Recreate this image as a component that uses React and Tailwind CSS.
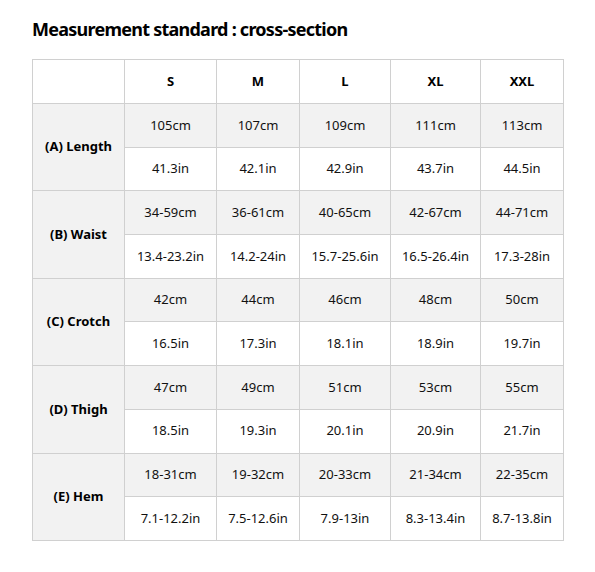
import React from "react";

const sizes = ["S", "M", "L", "XL", "XXL"];
const rows = [
  { label: "(A) Length", cm: ["105cm", "107cm", "109cm", "111cm", "113cm"], inch: ["41.3in", "42.1in", "42.9in", "43.7in", "44.5in"] },
  { label: "(B) Waist", cm: ["34-59cm", "36-61cm", "40-65cm", "42-67cm", "44-71cm"], inch: ["13.4-23.2in", "14.2-24in", "15.7-25.6in", "16.5-26.4in", "17.3-28in"] },
  { label: "(C) Crotch", cm: ["42cm", "44cm", "46cm", "48cm", "50cm"], inch: ["16.5in", "17.3in", "18.1in", "18.9in", "19.7in"] },
  { label: "(D) Thigh", cm: ["47cm", "49cm", "51cm", "53cm", "55cm"], inch: ["18.5in", "19.3in", "20.1in", "20.9in", "21.7in"] },
  { label: "(E) Hem", cm: ["18-31cm", "19-32cm", "20-33cm", "21-34cm", "22-35cm"], inch: ["7.1-12.2in", "7.5-12.6in", "7.9-13in", "8.3-13.4in", "8.7-13.8in"] },
];

const cell = "border border-[#d0d0d0] text-center align-middle p-0 h-[43.7px]";

export default function App() {
  return (
    <div className="bg-white w-[595px] h-[572px] pl-[32px] pt-[17px] text-[#111]" style={{ fontFamily: '"Noto Sans", "Open Sans", sans-serif' }}>
      <h1 className="text-[18px] font-bold leading-[24px] tracking-[-0.75px] text-black">Measurement standard : cross-section</h1>
      <table className="mt-[18px] border-collapse table-fixed w-[531px] text-[13px]">
        <colgroup>
          <col className="w-[92px]" />
          <col className="w-[92px]" />
          <col className="w-[83px]" />
          <col className="w-[91px]" />
          <col className="w-[90px]" />
          <col className="w-[83px]" />
        </colgroup>
        <thead>
          <tr>
            <th className={cell + " h-[44px]"}></th>
            {sizes.map((s) => (
              <th key={s} className={cell + " h-[44px] font-bold text-black"}>{s}</th>
            ))}
          </tr>
        </thead>
        <tbody>
          {rows.map((r) => (
            <React.Fragment key={r.label}>
              <tr>
                <td rowSpan={2} className={cell + " bg-[#f2f2f2] font-bold text-black"}>{r.label}</td>
                {r.cm.map((v, i) => (
                  <td key={i} className={cell + " bg-[#f2f2f2]"}>{v}</td>
                ))}
              </tr>
              <tr>
                {r.inch.map((v, i) => (
                  <td key={i} className={cell}>{v}</td>
                ))}
              </tr>
            </React.Fragment>
          ))}
        </tbody>
      </table>
    </div>
  );
}
